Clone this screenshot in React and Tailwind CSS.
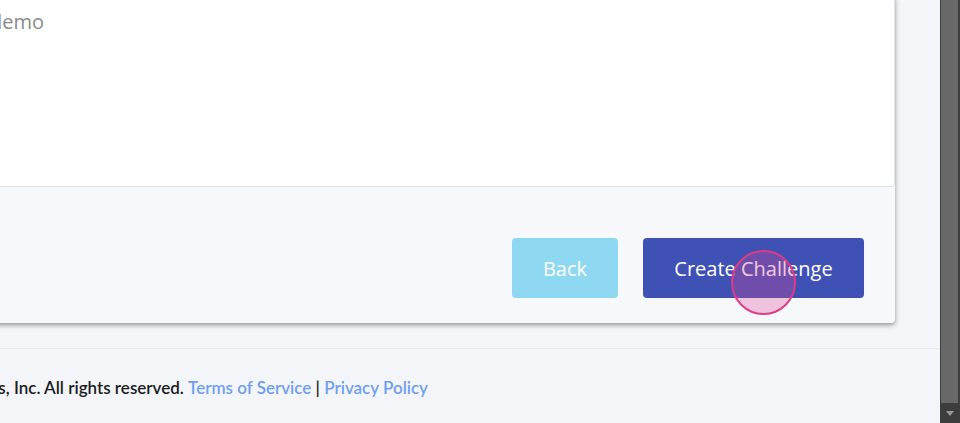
export default function App() {
  return (
    <div className="flex h-[423px] w-[960px] overflow-hidden bg-[#f4f5f9]">
      <div className="flex min-w-0 flex-1 flex-col overflow-hidden">
        <div className="-ml-[20px] -mt-[4px] pr-[45px]">
          <div className="relative rounded-[4px] bg-[#f7f8fc] shadow-[0_2px_5px_rgba(0,0,0,0.4)]">
            <div className="h-[191px] overflow-hidden rounded-[4px] border border-[#dde3e6] bg-white">
              <div className="flex w-[63px] justify-end whitespace-nowrap pt-[10px] font-['Open_Sans',sans-serif] text-[20px] text-[#8a8a8a]">
                Challenge demo
              </div>
            </div>
            <div className="flex justify-end gap-[25px] pb-[25px] pr-[31px] pt-[51px] font-['Open_Sans',sans-serif] text-[20px] text-white">
              <button className="h-[60px] w-[106px] rounded-[4px] bg-[#8fd8f2] pt-[2px]">Back</button>
              <button className="h-[60px] w-[221px] rounded-[4px] bg-[#3f51b5] pt-[2px]">Create Challenge</button>
            </div>
            <div className="pointer-events-none absolute left-[751px] top-[254px] h-[65px] w-[65px] rounded-full border-2 border-[#dc3d86] bg-[#dd4a95]/30" />
          </div>
        </div>
        <div className="mt-[25px] flex-1 border-t border-[#e6e8ee]">
          <div className="flex w-[428px] justify-end whitespace-nowrap pt-[26px] font-['Lato',sans-serif] text-[17px] font-semibold text-[#1c1c1c]">
            <span>© 2021 Skillshare Labs, Inc. All rights reserved.&nbsp;</span>
            <a className="text-[#6f9ff0]">Terms of Service</a>
            <span>&nbsp;|&nbsp;</span>
            <a className="text-[#6f9ff0]">Privacy Policy</a>
          </div>
        </div>
      </div>
      <div className="flex w-[20px] flex-col bg-[#3d3d3d] pl-[1px] pr-[2px]">
        <div className="h-[403px] bg-[#686868]" />
        <div className="flex flex-1 items-center justify-center">
          <svg width="8" height="5" viewBox="0 0 8 5">
            <path d="M0 0H8L4 5Z" fill="#9a9a9a" />
          </svg>
        </div>
      </div>
    </div>
  );
}
